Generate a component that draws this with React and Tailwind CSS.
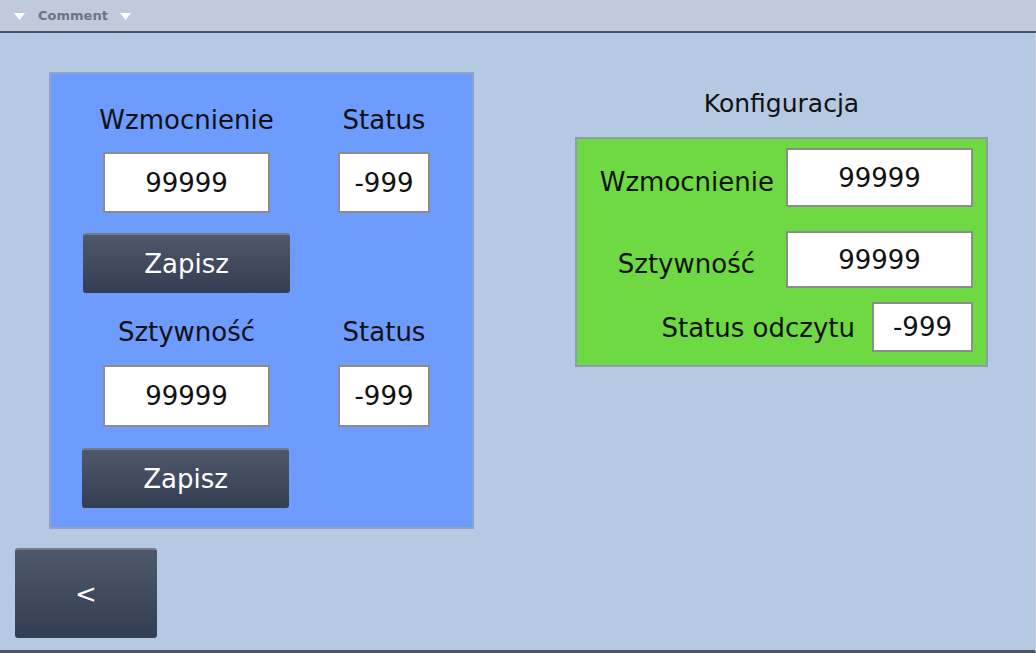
const font = "font-['DejaVu_Sans',sans-serif]"

function ValueBox({ value, className }) {
  return (
    <div
      className={`flex items-center justify-center border-2 border-[#8c8c8c] bg-white text-[26px] leading-none text-[#111] ${className}`}
    >
      {value}
    </div>
  )
}

function DarkButton({ children, className }) {
  return (
    <button
      type="button"
      className={`flex items-center justify-center rounded-[3px] border-t-2 border-[#737b89] bg-linear-to-b from-[#4f586b] to-[#333e52] text-white ${className}`}
    >
      {children}
    </button>
  )
}

function Triangle() {
  return (
    <svg width="11" height="8" viewBox="0 0 11 8">
      <path d="M0 0 H11 L5.5 7 Z" fill="#ffffff" />
    </svg>
  )
}

function ParamBlock({ label, value, status, first }) {
  return (
    <div className={first ? 'pt-[31px]' : 'pt-[24px]'}>
      <div className="flex h-[30px] items-center leading-[30px]">
        <div className="flex w-[207px] justify-center whitespace-nowrap">{label}</div>
        <div className="ml-[48px] flex w-[92px] justify-center whitespace-nowrap">Status</div>
      </div>
      <div className={`flex ${first ? 'mt-[17px]' : 'mt-[18px]'}`}>
        <ValueBox value={value} className={`ml-[20px] w-[167px] ${first ? 'h-[61px]' : 'h-[62px]'}`} />
        <ValueBox value={status} className={`ml-[68px] w-[92px] ${first ? 'h-[61px]' : 'h-[62px]'}`} />
      </div>
      <DarkButton className={`${first ? 'mt-[20px] ml-0' : 'mt-[21px] -ml-px'} h-[60px] w-[207px] text-[26px]`}>
        Zapisz
      </DarkButton>
    </div>
  )
}

export default function App() {
  return (
    <div className={`${font} flex h-[653px] w-[1036px] flex-col overflow-hidden bg-[#b5c9e2] text-[#111]`}>
      {/* comment strip */}
      <div className="flex h-[33px] shrink-0 items-start border-b-2 border-[#4a5365] bg-[#bfcadc] pl-[14px] pt-[13px]">
        <Triangle />
        <span className="ml-[13px] -mt-[4px] text-[13px] font-bold leading-[14px] text-[#6b7483]">Comment</span>
        <span className="ml-[12px]">
          <Triangle />
        </span>
      </div>

      <div className="flex flex-1 border-b-[3px] border-r border-b-[#4a5365] border-r-[#c9d4e4]">
        {/* left column */}
        <div className="flex flex-col pl-[15px] pt-[39px]">
          <div className="ml-[34px] h-[457px] w-[425px] border-2 border-[#8fa4c6] bg-[#6d9bfe] pl-[32px] text-[26px]">
            <ParamBlock label="Wzmocnienie" value="99999" status="-999" first />
            <ParamBlock label="Sztywność" value="99999" status="-999" />
          </div>
          <DarkButton className="mt-[19px] h-[90px] w-[142px] text-[26px]">&lt;</DarkButton>
        </div>

        {/* right column */}
        <div className="ml-[101px] flex flex-col pt-[56px]">
          <div className="w-[413px] text-center text-[25px] leading-[30px]">Konfiguracja</div>
          <div className="mt-[18px] flex h-[230px] w-[413px] flex-col items-end border-2 border-[#8f9cb0] bg-[#6fd944] pr-[13px] pt-[9px] text-[26px]">
            <div className="flex items-center">
              <span className="pt-[8px] leading-[30px]">Wzmocnienie</span>
              <ValueBox value="99999" className="ml-[12px] h-[59px] w-[187px]" />
            </div>
            <div className="mt-[24px] flex items-center">
              <span className="mr-[31px] pt-[8px] leading-[30px]">Sztywność</span>
              <ValueBox value="99999" className="h-[57px] w-[187px]" />
            </div>
            <div className="mt-[14px] flex items-center">
              <span className="mr-[17px] pt-[2px] leading-[30px]">Status odczytu</span>
              <ValueBox value="-999" className="h-[50px] w-[101px]" />
            </div>
          </div>
        </div>
      </div>
    </div>
  )
}
